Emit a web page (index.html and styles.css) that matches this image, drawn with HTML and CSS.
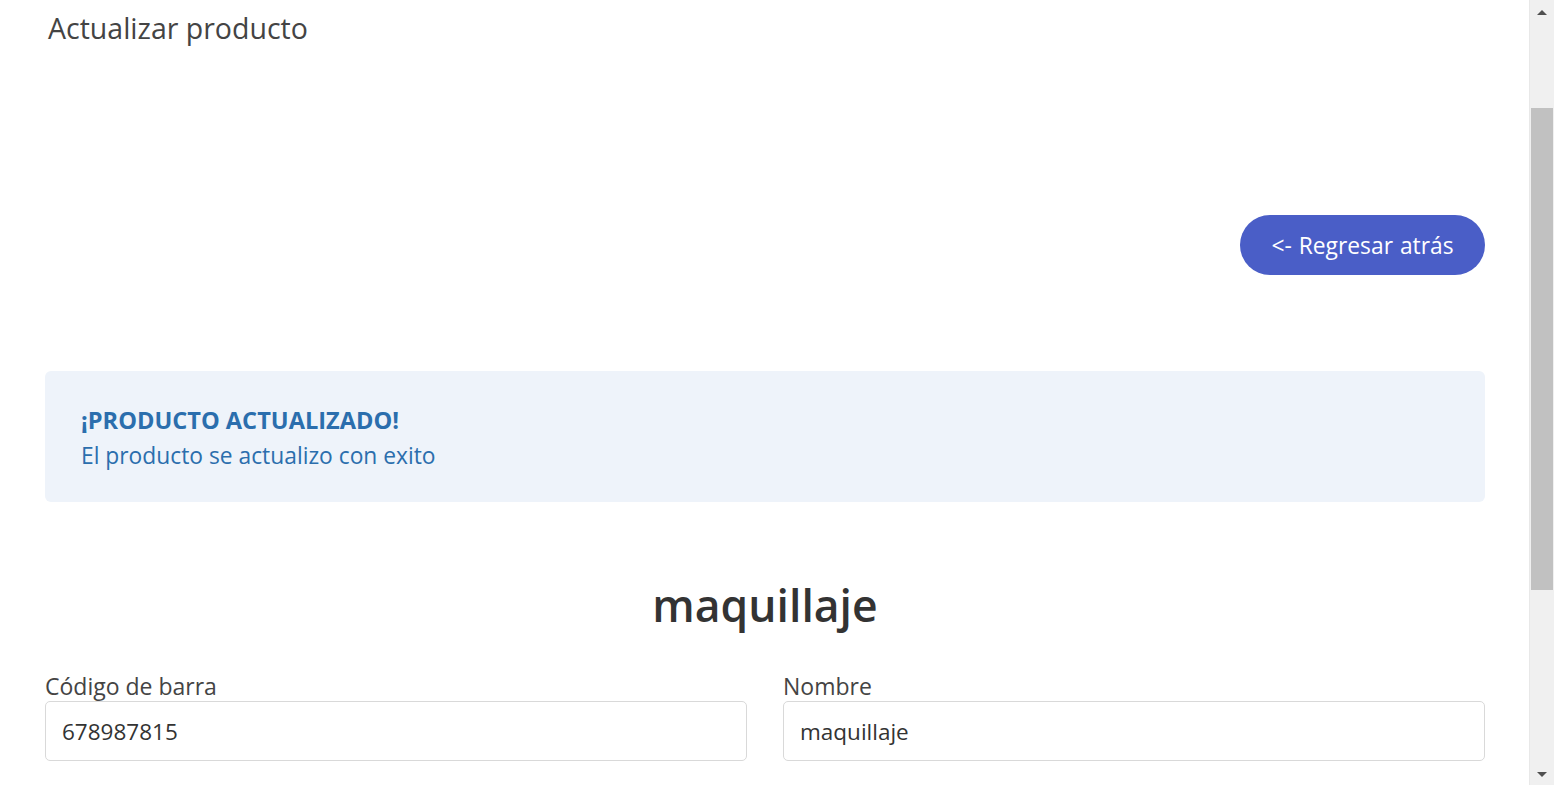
FILE: index.html
```html
<!DOCTYPE html>
<html lang="es">
<head>
<meta charset="utf-8">
<title>Actualizar producto</title>
<link rel="stylesheet" href="styles.css">
</head>
<body>
<div class="window">
  <main class="page">
    <h3 class="page-title">Actualizar producto</h3>
    <div class="actions">
      <a class="btn-back" href="#">&lt;- Regresar atrás</a>
    </div>
    <div class="alert">
      <div class="alert-title">¡PRODUCTO ACTUALIZADO!</div>
      <div class="alert-text">El producto se actualizo con exito</div>
    </div>
    <h1 class="product-name">maquillaje</h1>
    <form class="form-grid">
      <div class="field">
        <label class="field-label">Código de barra</label>
        <input class="field-input" type="text" value="678987815">
      </div>
      <div class="field">
        <label class="field-label">Nombre</label>
        <input class="field-input" type="text" value="maquillaje">
      </div>
    </form>
  </main>
  <aside class="scrollbar">
    <div class="sb-arrow sb-up"></div>
    <div class="sb-track">
      <div class="sb-gap-top"></div>
      <div class="sb-thumb"></div>
    </div>
    <div class="sb-arrow sb-down"></div>
  </aside>
</div>
</body>
</html>
```

FILE: styles.css
```css
* { box-sizing: border-box; }
html, body { margin: 0; padding: 0; height: 100%; overflow: hidden; background: #fff; }
body { font-family: "Open Sans", "Noto Sans", sans-serif; color: #333; }

.window { display: flex; height: 785px; }
.page { flex: 1; padding: 0 44px 0 45px; overflow: hidden; }

.page-title {
  margin: 8px 0 0 3px;
  font-size: 28.5px;
  font-weight: 400;
  color: #444;
  line-height: 40px;
}

.actions { display: flex; justify-content: flex-end; margin-top: 167px; }
.btn-back {
  display: inline-flex; align-items: center; justify-content: center;
  width: 245px; height: 60px; border-radius: 30px;
  background: #4a5ec7; color: #fff; text-decoration: none;
  font-size: 22.8px; word-spacing: 1px;
}

.alert {
  margin-top: 96px;
  background: #eef3fa;
  border-radius: 6px;
  padding: 31px 36px 29px;
  height: 131px;
  color: #2b6ead;
}
.alert-title { font-weight: 700; font-size: 23.6px; line-height: 36px; }
.alert-text { font-size: 22.8px; line-height: 36px; }

.product-name {
  margin: 73px 0 0;
  text-align: center;
  font-size: 44.5px;
  font-weight: 600;
  line-height: 60px;
  color: #333;
}

.form-grid { display: grid; grid-template-columns: 1fr 1fr; column-gap: 36px; margin-top: 36px; }
.field { display: flex; flex-direction: column; }
.field-label { font-size: 23px; line-height: 28px; margin-top: 1px; margin-bottom: 1px; color: #444; }
.field-input {
  margin-top: 0;
  height: 60px; border: 1px solid #d9d9d9; border-radius: 5px;
  padding: 0 16px; font: inherit; font-size: 22.5px; color: #333;
}

.scrollbar { width: 25px; background: #f0f0f0; display: flex; flex-direction: column; border-left: 1px solid #e8e8e8; }
.sb-arrow { height: 25px; position: relative; }
.sb-up::after, .sb-down::after {
  content: ""; position: absolute; left: 7px; width: 0; height: 0;
  border-left: 5px solid transparent; border-right: 5px solid transparent;
}
.sb-up::after { top: 10px; border-bottom: 5px solid #505050; }
.sb-down::after { bottom: 8px; border-top: 5px solid #505050; }
.sb-track { flex: 1; display: flex; flex-direction: column; padding: 0 1px 0 1px; }
.sb-gap-top { height: 83px; }
.sb-thumb { height: 482px; background: #c1c1c1; }
```
